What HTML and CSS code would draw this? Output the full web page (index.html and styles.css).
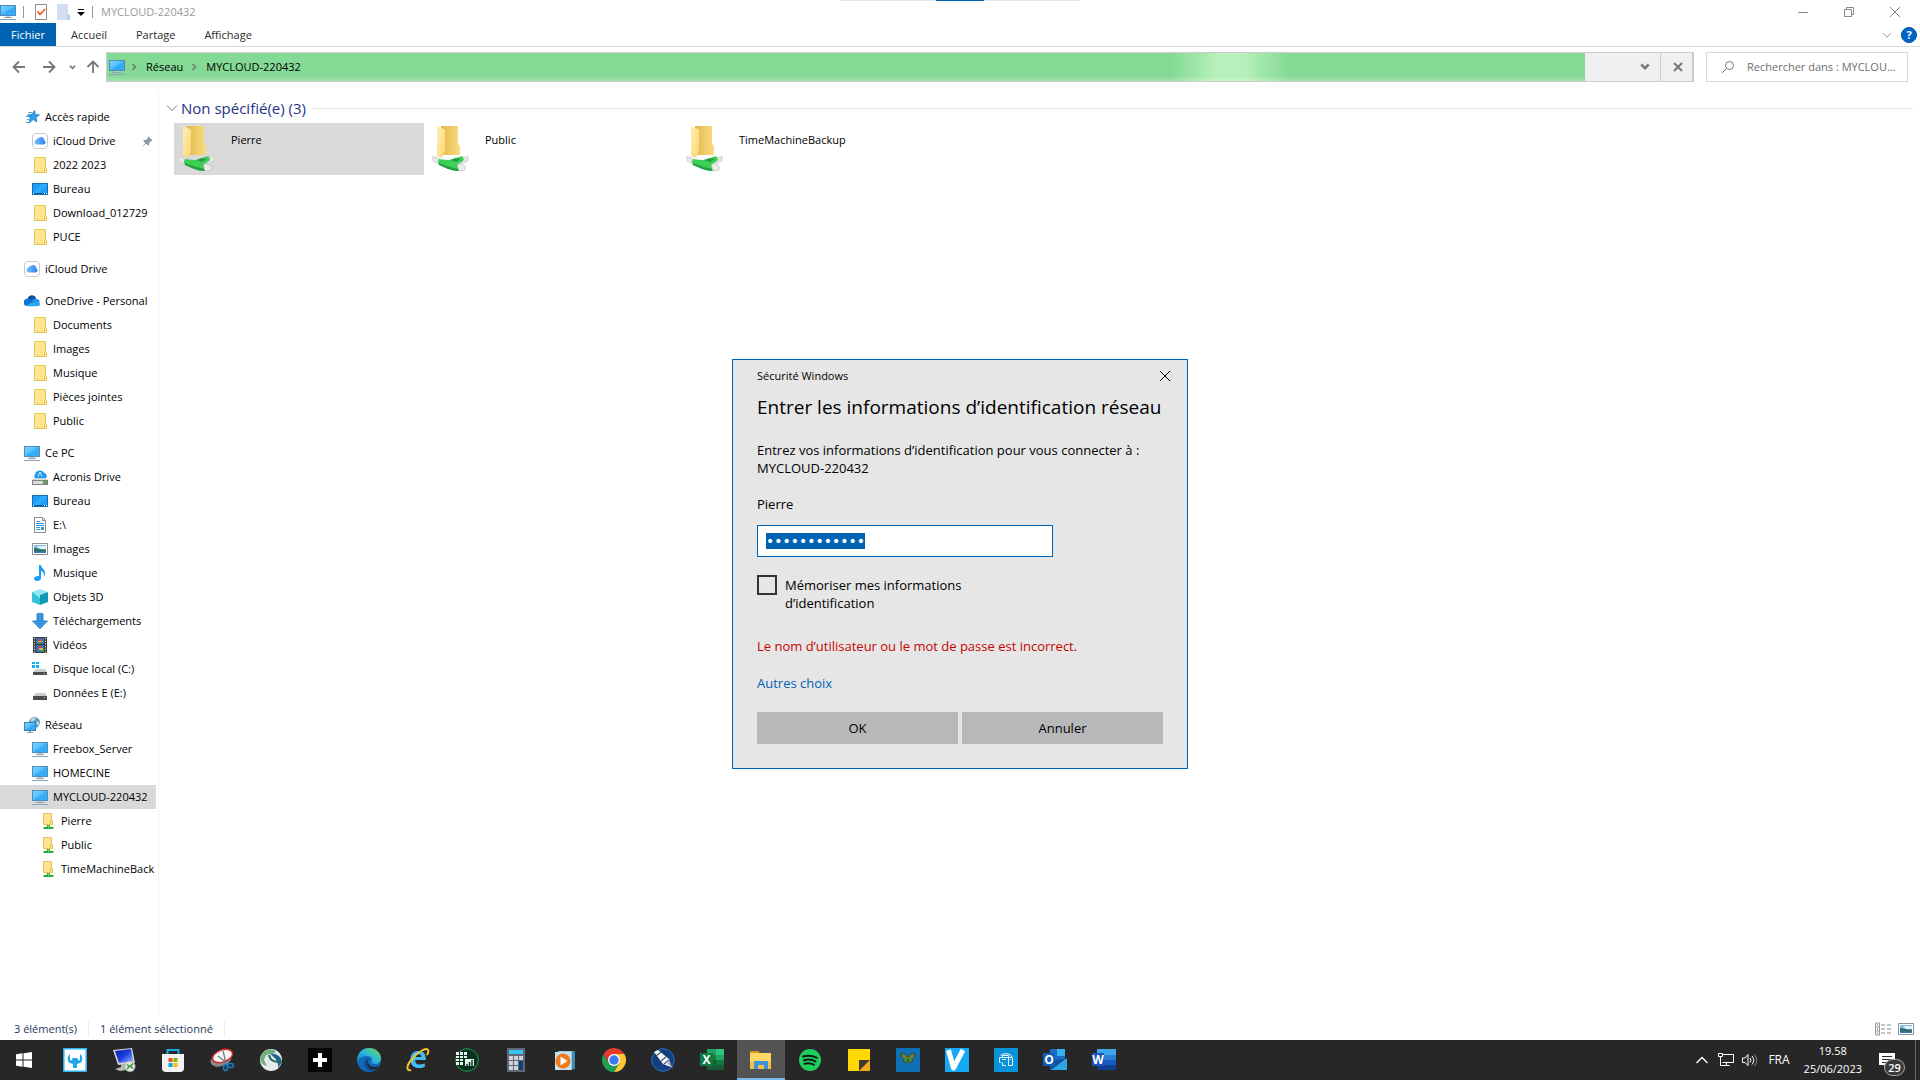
FILE: index.html
```html
<!DOCTYPE html>
<html lang="fr">
<head>
    <meta charset="UTF-8">
    <meta name="viewport" content="width=device-width, initial-scale=1.0">
    <title>MYCLOUD-220432</title>
    <link rel="stylesheet" href="styles.css">
</head>
<body>
    <!-- Shared icons -->
    <svg class="sprite" aria-hidden="true">
        <defs>
            <linearGradient id="g-screen" x1="0" y1="0" x2="1" y2="1">
                <stop offset="0" stop-color="#7fd3ff"/><stop offset=".5" stop-color="#4fbcff"/><stop offset=".55" stop-color="#31a9f5"/><stop offset="1" stop-color="#35b0ff"/>
            </linearGradient>
            <linearGradient id="g-folder" x1="0" y1="0" x2="1" y2="1">
                <stop offset="0" stop-color="#ffe9a2"/><stop offset="1" stop-color="#fddf80"/>
            </linearGradient>
            <linearGradient id="g-back" x1="0" y1="0" x2="1" y2="0">
                <stop offset="0" stop-color="#e3b84c"/><stop offset="1" stop-color="#fbdc80"/>
            </linearGradient>
            <linearGradient id="g-front" x1="0" y1="0" x2="1" y2="1">
                <stop offset="0" stop-color="#ffefb8"/><stop offset="1" stop-color="#fbd671"/>
            </linearGradient>
            <linearGradient id="g-cloud" x1="0" y1="0" x2="1" y2="0">
                <stop offset="0" stop-color="#7cc4fb"/><stop offset="1" stop-color="#2a7ef0"/>
            </linearGradient>
            <linearGradient id="g-edge" x1="0" y1="1" x2="1" y2="0">
                <stop offset="0" stop-color="#1273c9"/><stop offset=".5" stop-color="#2fb5dc"/><stop offset="1" stop-color="#6be04f"/>
            </linearGradient>
            <linearGradient id="g-rdp" x1="0" y1="0" x2="1" y2="1">
                <stop offset="0" stop-color="#0a1ba8"/><stop offset=".5" stop-color="#1b3fe0"/><stop offset="1" stop-color="#9fb8f5"/>
            </linearGradient>
        </defs>

        <symbol id="i-pc" viewBox="0 0 16 16">
            <path fill="#4d8db8" d="M0 1h16v11H0z"/><path fill="url(#g-screen)" d="M1 2h14v9H1z"/>
            <path fill="#c3cdd6" d="M6 12h4v1H6z"/><path fill="#8da3b5" d="M4 13h8v1H4zM0 15h16v1H0z"/>
        </symbol>
        <symbol id="i-folder" viewBox="0 0 16 16">
            <path fill="url(#g-folder)" stroke="#e8c24f" d="M2.500.5h11v10l1 1v4h-12z"/><path fill="#ffe9a2" stroke="#e8c24f" d="M12.500 15v-3.500l1-1 1 1v4"/>
        </symbol>
        <symbol id="i-netfolder" viewBox="0 0 16 16">
            <path fill="url(#g-folder)" stroke="#e8c24f" d="M3.500.5h8v6l1 1v4h-9z"/><path fill="none" stroke="#e8c24f" d="M10.500 11V8l1-1"/>
            <path fill="#22b02c" d="M7 12h3v2h3v2H4v-2h3z"/><path fill="#7fd684" d="M8 12h1v3H8z"/><path fill="#c8d2c8" d="M3 14h1v2H3zM13 14h1v2h-1z"/>
        </symbol>
        <symbol id="i-desktop" viewBox="0 0 16 16">
            <path fill="#0f6fb5" d="M0 2h16v12H0z"/><path fill="#1a9ffa" d="M1 3h14v9H1z"/><path fill="#3fb2ff" d="M10 3h5v1L7 12H1z" opacity=".6"/><path fill="#0b5c9b" d="M1 12h14v1H1z"/><path fill="#fff" d="M1 12h1v1H1zM12 12h1v1h-1zM14 12h1v1h-1z"/>
        </symbol>
        <symbol id="i-icloud" viewBox="0 0 16 16">
            <rect x=".5" y=".5" width="15" height="15" rx="3.500" fill="#fff" stroke="#c9c9ce"/>
            <path fill="url(#g-cloud)" d="M4.500 11.500a2.300 2.300 0 0 1-.4-4.500 1.800 1.800 0 0 1 2.300-1.600 3.300 3.300 0 0 1 6 2 2.200 2.200 0 0 1-.4 4.100z"/>
        </symbol>
        <symbol id="i-star" viewBox="0 0 16 16">
            <path fill="#2f9fe8" stroke="#1d7cc4" stroke-width=".8" d="M10.500 1.500l.8 4 4.200.4-3.600 2.500 1 4.600-3.700-2.500L5 14l1.400-4.800L3.500 6l4.300-.4z"/>
            <path stroke="#4aa9e0" stroke-width="1" d="M4 3.500h4M2 7.500h3M3 10.500h3M2 13.500h3"/>
        </symbol>
        <symbol id="i-pin" viewBox="0 0 12 12">
            <path fill="#8c99a3" d="M7 .5L11.500 5l-1 .8-.8-.2-2 2 .1 2-1 1L4.400 8.200 1 11.500l-.5-.4L3.500 7.500 1.300 5.300l1-1 2 .1 2-2L6 1.500z"/>
        </symbol>
        <symbol id="i-onedrive" viewBox="0 0 16 16">
            <path fill="#0a4fa3" d="M3.500 6a4.500 4.500 0 0 1 8.600-1l-3 5z"/><path fill="#1273cf" d="M3 13a3.200 3.200 0 0 1 .6-7.200 4 4 0 0 1 3 .8L13 11z"/><path fill="#1c8fe8" d="M8 7.500a4 4 0 0 1 5-1.500 3.400 3.400 0 0 1 2.800 3l-4 2z"/><path fill="#29a5ee" d="M2 12.500l8-4.300 6 1.800a2.600 2.600 0 0 1-2.500 3.200H3z"/>
        </symbol>
        <symbol id="i-acronis" viewBox="0 0 16 16">
            <path fill="#1b9bf0" d="M4 10a3.200 3.200 0 0 1-.8-5A4.800 4.800 0 0 1 12 3.800a3.200 3.200 0 0 1 1.500 5.700z"/><path fill="none" stroke="#d9f0ff" d="M6 7.500L8 3l2 4.500"/>
            <path fill="#d6d8da" d="M2.500 9h11l2.500 2H0z"/><path fill="#7e8285" d="M0 11h16v5H0z"/><path fill="#dcdcdc" d="M1 12h10v3H1z"/><path fill="#42c41f" d="M12 12h2v3h-2z"/>
        </symbol>
        <symbol id="i-page" viewBox="0 0 16 16">
            <path fill="#fff" stroke="#8a8a8a" d="M2.500.5h8l3 3v12h-11z"/><path fill="none" stroke="#8a8a8a" d="M10.500.5v3h3"/><path stroke="#2b94dd" d="M5 4.500h3M4 6.500h8M4 8.500h8M4 10.500h4M4 12.500h4"/><path fill="#3c9d8e" d="M9 10h3v3H9z"/>
        </symbol>
        <symbol id="i-image" viewBox="0 0 16 16">
            <path fill="#fff" stroke="#8f8f8f" d="M.5 2.500h15v11H.5z"/><path fill="#7cbcf0" d="M2 4h12v8H2z"/><path fill="#e3f1fb" d="M5 5h9v3H8z"/><path fill="#2d6e62" d="M2 7c3 0 5 1.800 12 1.500V12H2z"/><path fill="#3d79b8" d="M2 10.500h12V12H2z"/>
        </symbol>
        <symbol id="i-music" viewBox="0 0 16 16">
            <path fill="#199df5" d="M7 0h2c0 3 4.500 4.500 4 9-.2 1.500-.8 2.300-1.300 2.600C12.500 8 11 6.700 9 6v7c0 1.800-1.700 3-3.700 3S2 15 2 13.500 4 10.800 7 11z"/>
        </symbol>
        <symbol id="i-cube" viewBox="0 0 16 16">
            <path fill="#8de9f3" d="M0 3l8-3 8 3-8 3z"/><path fill="#35c3d8" d="M0 3l8 3v10l-8-3z"/><path fill="#0f97b4" d="M16 3L8 6v10l8-3z"/><path fill="#baf4f8" d="M0 3l8 3v3z" opacity=".7"/>
        </symbol>
        <symbol id="i-down" viewBox="0 0 16 16">
            <path fill="#3a94e6" stroke="#2477c2" stroke-width=".8" d="M5 .5h6V8h4.500L8 15.700.5 8H5z"/>
        </symbol>
        <symbol id="i-video" viewBox="0 0 16 16">
            <path fill="#3a3a3a" d="M1 0h14v16H1z"/><path fill="#3b6fc4" d="M4 1h8v6H4zM4 8h8v7H4z"/><path fill="#d4452a" d="M7 2h3v2H7zM6 9h3v2H6z"/><path fill="#e8b828" d="M6 4h5v1H6zM7 11h4v2H7z"/><path fill="#3f9c3c" d="M5 5h3v2H5zM9 13h3v2H9z"/>
            <path stroke="#eee" stroke-dasharray="1.200 1.500" d="M2.500 1v15M13.500 1v15"/>
        </symbol>
        <symbol id="i-disk" viewBox="0 0 16 16">
            <path fill="#c9cbcd" d="M4 8h9l2 3H1z"/><path fill="#4a4d50" d="M1 11h14v4H1z"/><path fill="#8cf58a" d="M12 12h1v1h-1z"/>
        </symbol>
        <symbol id="i-osdisk" viewBox="0 0 16 16">
            <path fill="#12b1ee" d="M0 1h3v2H0zM4 1h3v2H4zM0 4h3v3H0zM4 4h3v3H4z"/><path fill="#c9cbcd" d="M4 8h9l2 3H1z"/><path fill="#4a4d50" d="M1 11h14v3H1z"/><path fill="#8cf58a" d="M12 12h1v1h-1z"/>
        </symbol>
        <symbol id="i-network" viewBox="0 0 16 16">
            <circle cx="10.500" cy="5.500" r="5.500" fill="#5c9cbf"/><path fill="#b9dbe9" d="M7 2c2-2 5-1.500 5-.5s-2 1-2 2-2 1.500-3 .5zM13 4l2.500 2-1 3-2-2z"/>
            <path fill="#3a7fad" d="M0 5h12v9H0z"/><path fill="url(#g-screen)" d="M1 6h10v7H1z"/><path fill="#8da3b5" d="M5 14h2v1h2v1H3v-1h2z"/>
        </symbol>
        <symbol id="i-bigfolder" viewBox="0 0 40 48">
            <path fill="url(#g-back)" d="M10 1h17v17l2 4v8H10z"/><path fill="url(#g-front)" d="M6 1l8 4v21l-3 7-5-2z"/>
            <path fill="#e3e6e3" stroke="#c3c7c3" stroke-width=".6" d="M2 31l7 3-1 5-6-3q-1-3 0-5zM37 31q1 2 0 5l-7 3-2-5z"/>
            <path fill="#3ecf58" d="M8 34q6 1 11 1l12-4q3 3 1 5l-6 4 3 2v4q-6 0-11-2L8 40q-2-3 0-6z"/>
            <path fill="#23a140" d="M8 38l11 4 9 2v2q-6 0-11-2L8 40zM19 35l6-2 5 1-5 3z"/>
            <path fill="#eceeec" stroke="#b8bcb8" stroke-width=".6" d="M27 39l6 1q2 2 1 5l-6 1q-2-4-1-7z"/>
        </symbol>
        <symbol id="i-chevdown" viewBox="0 0 12 12"><path fill="none" stroke="currentColor" d="M1 3.500l5 5 5-5"/></symbol>
        <symbol id="i-smallchev" viewBox="0 0 8 8"><path fill="none" stroke="currentColor" stroke-width="2" d="M1 2l3 3 3-3"/></symbol>
        <symbol id="i-right" viewBox="0 0 8 8"><path fill="none" stroke="currentColor" stroke-width="1.500" d="M2.500 1l3 3-3 3"/></symbol>
        <symbol id="i-arrow" viewBox="0 0 14 14"><path fill="none" stroke="currentColor" stroke-width="1.800" d="M13 7H2M7 1.500L1.500 7 7 12.500"/></symbol>
        <symbol id="i-close" viewBox="0 0 12 12"><path stroke="currentColor" d="M1 1l10 10M11 1L1 11"/></symbol>
    </svg>

    <header class="titlebar">
        <svg class="icon16"><use href="#i-pc"/></svg>
        <span class="sep"></span>
        <svg class="quick-check" viewBox="0 0 12 16"><path fill="#fff" stroke="#8a8a8a" d="M.5.500h11v15H.5z"/><path fill="none" stroke="#f05a1a" stroke-width="1.800" d="M2.500 7.500L5 10.500l5-5.500"/></svg>
        <svg class="icon16 faded" viewBox="0 0 16 16"><path fill="#d3def1" d="M1 0h11v10l2 2v4H1z"/><path fill="#bccbe5" d="M11 12l1-2 2 2v4h-3z"/></svg>
        <svg class="quick-more" viewBox="0 0 8 8"><path d="M1 1h6v1H1zM0 4h8L4 8z"/></svg>
        <span class="sep"></span>
        <h1>MYCLOUD-220432</h1>
        <div class="window-buttons">
            <button type="button" aria-label="Réduire"><svg viewBox="0 0 12 12"><path stroke="currentColor" d="M1 6.500h10"/></svg></button>
            <button type="button" aria-label="Restaurer"><svg viewBox="0 0 12 12"><path fill="none" stroke="currentColor" d="M1.500 3.500h7v7h-7zM3.500 3.500v-2h7v7h-2"/></svg></button>
            <button type="button" aria-label="Fermer"><svg><use href="#i-close"/></svg></button>
        </div>
        <div class="snap-bar"></div>
    </header>

    <nav class="ribbon">
        <button type="button" class="file-tab">Fichier</button>
        <button type="button">Accueil</button>
        <button type="button">Partage</button>
        <button type="button">Affichage</button>
        <div class="ribbon-right">
            <svg class="expand"><use href="#i-chevdown"/></svg>
            <button type="button" class="help">?</button>
        </div>
    </nav>

    <div class="toolbar">
        <div class="history">
            <button type="button" aria-label="Précédent"><svg><use href="#i-arrow"/></svg></button>
            <button type="button" aria-label="Suivant"><svg class="flip"><use href="#i-arrow"/></svg></button>
            <button type="button" class="recent" aria-label="Emplacements récents"><svg><use href="#i-smallchev"/></svg></button>
            <button type="button" class="up" aria-label="Dossier parent"><svg class="turn"><use href="#i-arrow"/></svg></button>
        </div>
        <div class="address">
            <div class="crumbs">
                <svg class="icon16"><use href="#i-pc"/></svg>
                <svg class="crumb-sep"><use href="#i-right"/></svg>
                <a href="#">Réseau</a>
                <svg class="crumb-sep"><use href="#i-right"/></svg>
                <a href="#">MYCLOUD-220432</a>
            </div>
            <button type="button" class="dropdown" aria-label="Adresses précédentes"><svg><use href="#i-smallchev"/></svg></button>
            <button type="button" class="stop" aria-label="Arrêter"><svg viewBox="0 0 10 10"><path stroke="currentColor" stroke-width="2" d="M1 1l8 8M9 1L1 9"/></svg></button>
        </div>
        <label class="search">
            <svg viewBox="0 0 14 14"><circle cx="8.500" cy="5.500" r="4" fill="none" stroke="currentColor"/><path stroke="currentColor" d="M5.500 8.500L1 13"/></svg>
            <input type="text" placeholder="Rechercher dans : MYCLOU..." aria-label="Rechercher">
        </label>
    </div>

    <main>
        <nav class="sidebar">
            <ul>
                <li><a href="#"><svg><use href="#i-star"/></svg>Accès rapide</a></li>
                <li class="sub"><a href="#"><svg><use href="#i-icloud"/></svg>iCloud Drive<svg class="pin"><use href="#i-pin"/></svg></a></li>
                <li class="sub"><a href="#"><svg><use href="#i-folder"/></svg>2022 2023</a></li>
                <li class="sub"><a href="#"><svg><use href="#i-desktop"/></svg>Bureau</a></li>
                <li class="sub"><a href="#"><svg><use href="#i-folder"/></svg>Download_012729</a></li>
                <li class="sub"><a href="#"><svg><use href="#i-folder"/></svg>PUCE</a></li>
            </ul>
            <ul>
                <li><a href="#"><svg><use href="#i-icloud"/></svg>iCloud Drive</a></li>
            </ul>
            <ul>
                <li><a href="#"><svg><use href="#i-onedrive"/></svg>OneDrive - Personal</a></li>
                <li class="sub"><a href="#"><svg><use href="#i-folder"/></svg>Documents</a></li>
                <li class="sub"><a href="#"><svg><use href="#i-folder"/></svg>Images</a></li>
                <li class="sub"><a href="#"><svg><use href="#i-folder"/></svg>Musique</a></li>
                <li class="sub"><a href="#"><svg><use href="#i-folder"/></svg>Pièces jointes</a></li>
                <li class="sub"><a href="#"><svg><use href="#i-folder"/></svg>Public</a></li>
            </ul>
            <ul>
                <li><a href="#"><svg><use href="#i-pc"/></svg>Ce PC</a></li>
                <li class="sub"><a href="#"><svg><use href="#i-acronis"/></svg>Acronis Drive</a></li>
                <li class="sub"><a href="#"><svg><use href="#i-desktop"/></svg>Bureau</a></li>
                <li class="sub"><a href="#"><svg><use href="#i-page"/></svg>E:\</a></li>
                <li class="sub"><a href="#"><svg><use href="#i-image"/></svg>Images</a></li>
                <li class="sub"><a href="#"><svg><use href="#i-music"/></svg>Musique</a></li>
                <li class="sub"><a href="#"><svg><use href="#i-cube"/></svg>Objets 3D</a></li>
                <li class="sub"><a href="#"><svg><use href="#i-down"/></svg>Téléchargements</a></li>
                <li class="sub"><a href="#"><svg><use href="#i-video"/></svg>Vidéos</a></li>
                <li class="sub"><a href="#"><svg><use href="#i-osdisk"/></svg>Disque local (C:)</a></li>
                <li class="sub"><a href="#"><svg><use href="#i-disk"/></svg>Données E (E:)</a></li>
            </ul>
            <ul>
                <li><a href="#"><svg><use href="#i-network"/></svg>Réseau</a></li>
                <li class="sub"><a href="#"><svg><use href="#i-pc"/></svg>Freebox_Server</a></li>
                <li class="sub"><a href="#"><svg><use href="#i-pc"/></svg>HOMECINE</a></li>
                <li class="sub selected"><a href="#"><svg><use href="#i-pc"/></svg>MYCLOUD-220432</a></li>
                <li class="sub2"><a href="#"><svg><use href="#i-netfolder"/></svg>Pierre</a></li>
                <li class="sub2"><a href="#"><svg><use href="#i-netfolder"/></svg>Public</a></li>
                <li class="sub2"><a href="#"><svg><use href="#i-netfolder"/></svg>TimeMachineBack</a></li>
            </ul>
        </nav>

        <section class="files">
            <h2><svg><use href="#i-chevdown"/></svg>Non spécifié(e) (3)</h2>
            <div class="tiles">
                <button type="button" class="tile selected"><svg><use href="#i-bigfolder"/></svg><span>Pierre</span></button>
                <button type="button" class="tile"><svg><use href="#i-bigfolder"/></svg><span>Public</span></button>
                <button type="button" class="tile"><svg><use href="#i-bigfolder"/></svg><span>TimeMachineBackup</span></button>
            </div>
        </section>
    </main>

    <footer class="statusbar">
        <span>3 élément(s)</span>
        <span>1 élément sélectionné</span>
        <div class="views">
            <button type="button" aria-label="Détails"><svg viewBox="0 0 16 13"><path fill="#fff" stroke="#9a9a9a" d="M.5.500h4v12h-4zM.5 4.500h4M.5 8.500h4"/><path fill="#3a6fb0" d="M2 2h1v1H2zM2 6h1v1H2z"/><path fill="#c0392b" d="M2 10h1v1H2z"/><path stroke="#8a8a8a" d="M6 2.500h4M12 2.500h4M6 6.500h4M12 6.500h4M6 10.500h4M12 10.500h4"/></svg></button>
            <button type="button" aria-label="Grandes icônes"><svg viewBox="0 1 16 14"><use href="#i-image" width="16" height="16"/></svg></button>
        </div>
    </footer>

    <div class="taskbar">
        <button type="button" class="start" aria-label="Démarrer"><svg viewBox="0 0 24 24"><path fill="#fff" d="M4 6.300l6.500-1v6.200H4zM11.500 5.200L20 4v7.500h-8.500zM4 12.500h6.500v6.200l-6.500-1zM11.500 12.500H20V20l-8.500-1.200z"/></svg></button>
        <button type="button" aria-label="Outils"><svg viewBox="0 0 24 24"><path fill="#fff" stroke="#2cb4f2" stroke-width="1.500" d="M.8.800h22.400v22.400H.8z"/><path fill="#1ea5ea" d="M7 6c-3 2-3 8 0 9l3 1v4h4v-4l3-1c3-1 3-7 0-9v5c0 2-2 2-2 0l-1-1h-4l-1 1c0 2-2 2-2 0z"/></svg></button>
        <button type="button" aria-label="Bureau à distance"><svg viewBox="0 0 24 24"><path fill="#d9d9d4" d="M1 2l19-2 3 15-17 2z"/><path fill="url(#g-rdp)" d="M3 3l16-2 2 12-14 2z"/><path fill="#b9b9b3" d="M9 16l6-1 1 4 4 2-12 2-5-2 6-2z"/><circle cx="18" cy="18.500" r="5.200" fill="#e4e8e4" stroke="#999" stroke-width=".5"/><path fill="none" stroke="#2d9b3b" stroke-width="1.500" d="M15 16.500l2.500 2-2.500 2.500M21 15.500l-2.500 2.500 2.500 2.500"/></svg></button>
        <button type="button" aria-label="Microsoft Store"><svg viewBox="0 0 24 24"><path fill="none" stroke="#1ba8e0" stroke-width="2" d="M6.500 7V2h11v5"/><path fill="#f3f3f3" d="M1 6h22v14q0 4-4 4H5q-4 0-4-4z"/><path fill="#f25022" d="M7.500 10h4v4h-4z"/><path fill="#7fba00" d="M12.500 10h4v4h-4z"/><path fill="#00a4ef" d="M7.500 15h4v4h-4z"/><path fill="#ffb900" d="M12.500 15h4v4h-4z"/></svg></button>
        <button type="button" aria-label="Capture"><svg viewBox="0 0 24 24"><ellipse cx="11" cy="11.500" rx="11" ry="6.500" transform="rotate(-20 11 11)" fill="#8b8b8b"/><ellipse cx="12.500" cy="8" rx="10.500" ry="6" transform="rotate(-20 12.500 8)" fill="#f7f7f7" stroke="#d8242c" stroke-width="1.500"/><path stroke="#777" stroke-width="1.300" d="M13 3l3 12M8 8l10 8"/><g fill="none" stroke="#1580cc" stroke-width="1.600"><ellipse cx="15.500" cy="19.500" rx="2" ry="3"/><ellipse cx="20.500" cy="17.500" rx="3" ry="2"/></g></svg></button>
        <button type="button" aria-label="Réseau virtuel"><svg viewBox="0 0 24 24"><circle cx="12" cy="12" r="11" fill="#e4e9ea"/><path fill="#6fb07a" d="M2 8C5 1 12 0 17 3l-3 3c-5-1-8 1-9 6l3 6-3-1C1 14 1 11 2 8z"/><path fill="#1f6590" d="M11 6c6-1 11 2 12 8l-4 6c1-5-2-10-8-14z"/><path fill="none" stroke="#2a6b5c" stroke-width="2" d="M10 7c1 5 5 8 12 6"/></svg></button>
        <button type="button" aria-label="Plus"><svg viewBox="0 0 24 24"><path fill="#060606" d="M0 0h24v24H0z"/><path stroke="#fff" stroke-width="4" d="M12 5v14M5 12h14"/></svg></button>
        <button type="button" aria-label="Edge"><svg viewBox="0 0 24 24"><circle cx="12" cy="12" r="12" fill="#1468b8"/><path fill="url(#g-edge)" d="M0 12C1 4 6 0 12 0c7 0 12 5 12 10 0 4-3 6-6 6-3 0-4-1-3.500-2.500C16 11 14 8 10 8 5 8 1 11 0 15z"/><path fill="#262626" d="M11.500 11c-2 4 1 8 6 8 2 0 4-.7 5-1.500-1 2-2 3-3.500 4C13 22 9 19 9 15c0-2 1-3.500 2.500-4z"/><path fill="#0c4b94" d="M11.500 11C8 11 6 15 8 19s7 5 10 3.500C13 22 8 17 11.500 11z"/></svg></button>
        <button type="button" aria-label="Internet Explorer"><svg viewBox="0 0 24 24"><text x="12" y="20" class="ie-letter">e</text><path fill="none" stroke="#f5c428" stroke-width="2" d="M5 22c-5 1-5-4 1-11S20-1 22 2c1 1 0 3-1 5"/></svg></button>
        <button type="button" aria-label="Tableur"><svg viewBox="0 0 24 24"><circle cx="12" cy="12" r="11.300" fill="#06331f" stroke="#1f9c50"/><path fill="#e6f2ea" d="M1 4h11v13H1z"/><path stroke="#06331f" d="M1 7.500h11M1 10.500h11M1 13.500h11M4.500 4v13M8.500 4v13"/><path fill="#e6f2ea" stroke="#06331f" d="M9.500 10.500h10v8h-10z"/><path stroke="#06331f" stroke-width="1.500" d="M12 18v-2M14.500 18v-4M17 18v-6"/></svg></button>
        <button type="button" aria-label="Calculatrice"><svg viewBox="0 0 24 24"><path fill="#5f6875" d="M3 0h18v24H3z"/><path fill="#38c3f2" d="M5 2h14v4H5z"/><path fill="#cfd3d8" d="M5 8h4v4H5zM10 8h4v4h-4zM15 8h4v4h-4zM5 13h4v4H5zM10 13h4v4h-4zM5 18h4v4H5zM10 18h4v4h-4z"/><path fill="#0f3f78" d="M15 13h4v9h-4z"/></svg></button>
        <button type="button" aria-label="Lecteur multimédia"><svg viewBox="0 0 24 24"><path fill="#3c89b3" d="M4 3h18v18l-5 1z"/><path fill="#9bcbe4" d="M6 3h13v19H6z"/><path fill="#c4e2f0" d="M2 4h16v18H2z"/><circle cx="10" cy="13" r="7.500" fill="#ef7a1a"/><path fill="#fff" d="M7.500 8.500v9l7-4.500z"/></svg></button>
        <button type="button" aria-label="Chrome"><svg viewBox="0 0 24 24"><path fill="#fcc934" d="M12 6h10.400A12 12 0 0 1 12 24l5.200-9z"/><path fill="#1ea050" d="M1.600 6l5.200 9L12 18l5.200-3L12 24A12 12 0 0 1 1.600 6z"/><path fill="#e33b2e" d="M1.600 6A12 12 0 0 1 22.400 6H12l-5.200 9z"/><circle cx="12" cy="12" r="6" fill="#fff"/><circle cx="12" cy="12" r="4.700" fill="#3a7bef"/></svg></button>
        <button type="button" aria-label="Scanner"><svg viewBox="0 0 24 24"><circle cx="12" cy="12" r="11.300" fill="#123f80" stroke="#2e6fc0"/><path fill="#f4f4f4" d="M3 4l4-2 11 9 2 8-3-1-5-2z"/><path stroke="#47566b" stroke-width="1.200" d="M5 8l5-4M10 13l5-4M13 16l5-4"/><path fill="#9aa5b3" d="M16 15l3-1 3 7z"/></svg></button>
        <button type="button" aria-label="Excel"><svg viewBox="0 0 24 24"><path fill="#21a366" d="M7 1h17v11H7z"/><path fill="#107c41" d="M7 7h9v11H7z"/><path fill="#33c481" d="M16 1h8v6h-8z"/><path fill="#185c37" d="M7 12h17v10H7z"/><path fill="#107c41" d="M16 12h8v5h-8zM0 5h13v13H0z"/><text x="6.500" y="16" class="app-letter">X</text></svg></button>
        <button type="button" class="active" aria-label="Explorateur"><svg viewBox="0 0 24 24"><path fill="#d99a1c" d="M1 3h8l2 2v3H1z"/><path fill="#ffd766" d="M1 5h21v16H1z"/><path fill="#f5bf45" d="M1 14h21v7H1z"/><path fill="#3c94d8" d="M5 13h14v8h-4v-4H9v4H5z"/></svg></button>
        <button type="button" aria-label="Spotify"><svg viewBox="0 0 24 24"><circle cx="12" cy="12" r="11" fill="#1ed05e"/><path fill="none" stroke="#181818" stroke-width="2" stroke-linecap="round" d="M5 8.500c4.500-1.300 9.500-1 14 1.300M6 12.300c4-1.200 8-.8 11.500 1.200M6.500 15.800c3.500-.9 6.500-.6 9.500 1"/></svg></button>
        <button type="button" aria-label="Pense-bête"><svg viewBox="0 0 24 24"><path fill="#ffd900" d="M1 1h22v11L12 23H1z"/><path fill="#3f3b32" d="M12 12h11L12 23z"/><path fill="#f5a81c" d="M23 12v11H12z"/></svg></button>
        <button type="button" aria-label="Papillon"><svg viewBox="0 0 24 24"><path fill="#0f70b4" d="M0 0h24v24H0z"/><path fill="#3f8f3a" stroke="#5a3418" stroke-width=".8" d="M12 9C10 6 7 5 5 6c0 3 1 4 2.500 5 0 2 1 4 2 4S12 13 12 11c0 2 1.500 4 2.500 4s2-2 2-4C18 10 19 9 19 6c-2-1-5 0-7 3z"/><path fill="#cf5a2a" d="M6 6.500l4 2-2 1zM18 6.500l-4 2 2 1z"/></svg></button>
        <button type="button" aria-label="Vente"><svg viewBox="0 0 24 24"><path fill="#14a8f5" d="M0 0h24v24H0z"/><path fill="none" stroke="#fff" stroke-width="5" stroke-linejoin="round" d="M3.500 2L8.500 20 18 2"/></svg></button>
        <button type="button" aria-label="Imprimante"><svg viewBox="0 0 24 24"><path fill="#0893d8" d="M0 0h24v24H0z"/><path fill="none" stroke="#e5f4fc" d="M8.500 9.500v-2h6v2M12 17.500H8.500v-3M7 14.500H5.500v-5h9M8 11.500h4M6.500 7.500q3-3 8-1.500 3 1 3.500 3M14.500 9.500h4v8h-4zM16 11.500h1"/></svg></button>
        <button type="button" aria-label="Outlook"><svg viewBox="0 0 24 24"><path fill="#1a6fc4" d="M7 1h15v13H7z"/><path fill="#35b0ee" d="M14 1h8v7h-8z"/><path fill="#1052a0" d="M7 12l17-1v11H7z"/><path fill="#2ea6e8" d="M24 10v12H8z"/><path fill="#0f5fb8" d="M0 5h12v13H0z"/><text x="6" y="16" class="app-letter">O</text></svg></button>
        <button type="button" aria-label="Word"><svg viewBox="0 0 24 24"><path fill="#41a5ee" d="M5 1h19v6H5z"/><path fill="#2b7cd3" d="M5 7h19v5H5z"/><path fill="#185abd" d="M5 12h19v5H5z"/><path fill="#103f91" d="M5 17h19v5H5z"/><path fill="#1a56b8" d="M0 5h12v13H0z"/><text x="6" y="16" class="app-letter">W</text></svg></button>

        <div class="tray">
            <svg viewBox="0 0 14 16"><path fill="none" stroke="#fff" stroke-width="1.300" d="M1.500 11L7 5.500l5.500 5.500"/></svg>
            <svg viewBox="0 0 16 16"><path fill="none" stroke="#fff" d="M5 2.500h10.500v8H4.500M.5 1.500h4v3h-4zM2.500 4.500v9h4M8.500 10.500v3M5.500 13.500h6"/></svg>
            <svg viewBox="0 0 16 16"><path fill="none" stroke="#fff" d="M.5 6v4.500H3l3 3v-11L3 6z"/><path fill="none" stroke="#fff" d="M8 6q2 2.300 0 4.500M10 4q3.500 4.300 0 8.500"/><path fill="none" stroke="#888" d="M12.500 2.500q4.500 5.800 0 11.500"/></svg>
            <span class="lang">FRA</span>
            <div class="clock"><span>19.58</span><span>25/06/2023</span></div>
            <button type="button" class="notif" aria-label="Notifications">
                <svg viewBox="0 0 16 16"><path fill="#fff" d="M0 1h16v12H8l-3 3v-3H0z"/><path stroke="#262626" d="M3 4.500h10M3 7.500h10M3 10.500h6"/></svg>
                <span>29</span>
            </button>
        </div>
    </div>

    <!-- Credentials window -->
    <form class="dialog" role="dialog" aria-labelledby="dialog-title">
        <div class="dialog-bar">
            <span>Sécurité Windows</span>
            <button type="button" aria-label="Fermer"><svg><use href="#i-close"/></svg></button>
        </div>
        <h2 id="dialog-title">Entrer les informations d’identification réseau</h2>
        <p class="intro">Entrez vos informations d’identification pour vous connecter à : MYCLOUD-220432</p>
        <label for="password">Pierre</label>
        <input type="password" id="password" value="motdepasse12">
        <div class="remember">
            <input type="checkbox" id="remember">
            <label for="remember">Mémoriser mes informations d’identification</label>
        </div>
        <p class="error">Le nom d’utilisateur ou le mot de passe est incorrect.</p>
        <a href="#">Autres choix</a>
        <div class="actions">
            <button type="submit">OK</button>
            <button type="button">Annuler</button>
        </div>
    </form>

    <script>
        const password = document.getElementById("password");
        password.focus();
        password.select();
    </script>
</body>
</html>
```
FILE: styles.css
```css
/* General Reset and Font */
* {
    box-sizing: border-box;
    margin: 0;
    padding: 0;
}

body {
    display: flex;
    flex-direction: column;
    height: 100vh;
    overflow: hidden;
    background-color: #fff;
    color: #000;
    font: 11px/16px "Open Sans", "Noto Sans", sans-serif;
}

button,
input {
    font: inherit;
    color: inherit;
    border: none;
    background: none;
}

button {
    display: flex;
    align-items: center;
    justify-content: center;
}

a {
    color: inherit;
    text-decoration: none;
}

svg {
    flex: none;
}

.sprite {
    position: absolute;
    width: 0;
    height: 0;
}

.icon16 {
    width: 16px;
    height: 16px;
}

/* Title bar */
.titlebar {
    position: relative;
    display: flex;
    align-items: center;
    height: 23px;
    padding-right: 2px;
}

.titlebar h1 {
    margin-left: 8px;
    font-size: 11px;
    font-weight: normal;
    color: #999;
}

.sep {
    width: 1px;
    height: 12px;
    margin-left: 7px;
    background-color: #999;
}

.quick-check {
    width: 12px;
    height: 16px;
    margin: 0 9px 0 11px;
}

.quick-more {
    width: 8px;
    height: 8px;
    margin-left: 5px;
}

.window-buttons {
    display: flex;
    margin-left: auto;
    color: #888;
}

.window-buttons button {
    width: 46px;
    height: 20px;
}

.window-buttons svg {
    width: 12px;
    height: 12px;
}

.snap-bar {
    position: absolute;
    top: 0;
    left: 50%;
    width: 240px;
    height: 1px;
    margin-left: -120px;
    background: linear-gradient(90deg, #e5e5e5 40%, #0063b1 40%, #0063b1 60%, #e5e5e5 60%);
}

/* Ribbon */
.ribbon {
    display: flex;
    gap: 1px;
    height: 24px;
    border-bottom: 1px solid #dadada;
    color: #2b2b2b;
}

.ribbon > button {
    padding: 0 14px;
}

.ribbon .file-tab {
    width: 56px;
    padding: 0;
    background-color: #0063b1;
    color: #fff;
}

.ribbon-right {
    display: flex;
    align-items: center;
    gap: 9px;
    margin-left: auto;
    padding-right: 3px;
}

.expand {
    width: 10px;
    height: 10px;
    color: #888;
}

.help {
    width: 16px;
    height: 16px;
    border: 1px solid #004a94;
    border-radius: 50%;
    background-color: #0067c8;
    color: #fff;
    font-weight: bold;
}

/* Navigation and address bar */
.toolbar {
    display: flex;
    align-items: center;
    height: 42px;
    padding: 0 12px 2px 0;
}

.history {
    display: flex;
    width: 106px;
    padding-left: 4px;
    color: #777;
}

.history button {
    width: 30px;
    height: 24px;
}

.history .recent {
    width: 16px;
}

.history .up {
    width: 26px;
}

.history svg {
    width: 14px;
    height: 14px;
}

.history .recent svg {
    width: 7px;
    height: 7px;
}

.flip {
    transform: scaleX(-1);
}

.turn {
    transform: rotate(90deg);
}

.address {
    display: flex;
    flex: 1;
    height: 30px;
    border: 1px solid #ccc;
    border-right-width: 2px;
    background-color: #f0f0f0;
}

.crumbs {
    display: flex;
    align-items: center;
    flex: 1;
    padding-left: 2px;
    background:
        linear-gradient(0deg, rgba(255, 255, 255, .25), rgba(255, 255, 255, 0) 5px),
        linear-gradient(90deg, transparent 72%, #a4e8ab 74%, #b7f0bb 75%, #b7f0bb 77%, #a4e8ab 78%, transparent 80%),
        #84d994;
}

.crumb-sep {
    width: 8px;
    height: 8px;
    margin: 0 8px 0 5px;
    color: #6d7d70;
}

a + .crumb-sep {
    margin: 0 8px 0 7px;
}

.address .dropdown {
    width: 76px;
    padding-right: 10px;
    justify-content: flex-end;
    border-right: 1px solid #ccc;
    color: #777;
}

.dropdown svg {
    width: 10px;
    height: 10px;
}

.address .stop {
    width: 31px;
    padding-left: 2px;
    color: #777;
}

.stop svg {
    width: 10px;
    height: 10px;
}

.search {
    display: flex;
    align-items: center;
    gap: 12px;
    width: 202px;
    height: 30px;
    margin-left: 12px;
    padding: 0 4px 0 14px;
    border: 1px solid #d9d9d9;
    color: #777;
}

.search svg {
    width: 14px;
    height: 14px;
}

.search input {
    flex: 1;
    min-width: 0;
}

.search input::placeholder {
    color: #6d6d6d;
    opacity: 1;
}

/* Main area */
main {
    display: flex;
    flex: 1;
    min-height: 0;
}

.sidebar {
    width: 159px;
    padding: 16px 2px 0 0;
    border-right: 1px solid #f3f3f3;
    overflow: hidden;
}

.sidebar ul {
    margin-bottom: 8px;
    list-style: none;
}

.sidebar a {
    display: flex;
    align-items: center;
    gap: 5px;
    height: 24px;
    padding-left: 24px;
    white-space: nowrap;
}

.sidebar svg {
    width: 16px;
    height: 16px;
}

.sidebar .pin {
    width: 11px;
    height: 11px;
    margin: 0 3px 0 auto;
}

.sidebar .sub a {
    padding-left: 32px;
}

.sidebar .sub2 a {
    padding-left: 40px;
}

.selected {
    background-color: #d9d9d9;
}

.files {
    flex: 1;
    padding: 7px 7px 0 7px;
}

.files h2 {
    display: flex;
    align-items: center;
    height: 24px;
    font-size: 15px;
    font-weight: normal;
    color: #1e3287;
}

.files h2 svg {
    width: 12px;
    height: 12px;
    margin-right: 3px;
    color: #777;
}

.files h2::after {
    content: "";
    flex: 1;
    height: 1px;
    margin-left: 7px;
    background-color: #e2e2e2;
}

.tiles {
    display: flex;
    gap: 4px;
    padding: 3px 0 0 8px;
}

.tile {
    align-items: flex-start;
    justify-content: flex-start;
    gap: 14px;
    width: 250px;
    height: 52px;
    padding: 2px 3px;
}

.tile svg {
    width: 40px;
    height: 48px;
}

.tile span {
    padding-top: 7px;
}

/* Status bar */
.statusbar {
    display: flex;
    align-items: center;
    height: 24px;
    padding: 2px 6px 0 3px;
    color: #1e395b;
}

.statusbar span {
    padding: 0 11px;
    border-right: 1px solid #eee;
}

.views {
    display: flex;
    gap: 7px;
    margin-left: auto;
}

.views svg {
    width: 16px;
    height: 14px;
}

/* Taskbar */
.taskbar {
    display: flex;
    gap: 1px;
    height: 40px;
    background-color: #272727;
    color: #fff;
}

.taskbar > button {
    width: 48px;
}

.taskbar > .start {
    margin-right: 2px;
}

.taskbar > button svg {
    width: 24px;
    height: 24px;
    overflow: visible;
}

.taskbar > .active {
    background-color: #535353;
    border-bottom: 2px solid #76b9ed;
    padding-top: 2px;
}

.app-letter {
    fill: #fff;
    font-size: 12px;
    font-weight: bold;
    text-anchor: middle;
}

.ie-letter {
    fill: #46bdf2;
    font-size: 30px;
    font-weight: bold;
    text-anchor: middle;
}

.tray {
    display: flex;
    align-items: center;
    margin-left: auto;
    padding-right: 4px;
}

.tray > svg {
    width: 16px;
    height: 16px;
    margin-right: 8px;
}

.lang {
    margin: 0 14px 0 2px;
    font-size: 12px;
}

.clock {
    display: flex;
    flex-direction: column;
    line-height: 18px;
    text-align: center;
}

.notif {
    position: relative;
    height: 40px;
    padding: 0 20px 0 17px;
    border-right: 1px solid #666;
}

.notif svg {
    width: 16px;
    height: 16px;
}

.notif span {
    position: absolute;
    top: 19px;
    left: 22px;
    width: 21px;
    height: 17px;
    border: 1px solid #aaa;
    border-radius: 9px;
    background-color: #3a3a3a;
    line-height: 15px;
    font-weight: 600;
}

/* Credentials window */
.dialog {
    position: absolute;
    top: 359px;
    left: 50%;
    display: flex;
    flex-direction: column;
    width: 456px;
    padding: 0 24px 24px;
    border: 1px solid #0063b1;
    background-color: #e6e6e6;
    font-size: 13px;
    line-height: 18px;
    transform: translateX(-50%);
}

.dialog-bar {
    display: flex;
    align-items: center;
    justify-content: space-between;
    height: 32px;
    font-size: 11px;
}

.dialog-bar button {
    width: 44px;
    height: 32px;
    margin-right: -24px;
}

.dialog-bar svg {
    width: 12px;
    height: 12px;
}

.dialog h2 {
    margin-bottom: 19px;
    font-size: 19px;
    font-weight: normal;
    line-height: 30px;
    white-space: nowrap;
}

.intro {
    margin-bottom: 18px;
}

#password {
    width: 296px;
    height: 32px;
    margin: 12px 0 18px;
    padding: 0 8px;
    border: 1px solid #0063b1;
    outline: none;
    background-color: #fff;
    font: 14px/20px "DejaVu Sans", sans-serif;
}

#password::selection {
    background-color: #0063b1;
    color: #fff;
}

.remember {
    display: flex;
    gap: 8px;
    width: 240px;
    margin-bottom: 25px;
}

.remember input {
    flex: none;
    width: 20px;
    height: 20px;
    border: 2px solid #333;
    appearance: none;
}

.remember label {
    padding-top: 1px;
}

.error {
    margin-bottom: 19px;
    color: #c50500;
}

.dialog > a {
    align-self: flex-start;
    margin-bottom: 20px;
    color: #0063b1;
}

.actions {
    display: flex;
    gap: 4px;
}

.actions button {
    flex: 1;
    height: 32px;
    background-color: #b8b8b8;
}
```
